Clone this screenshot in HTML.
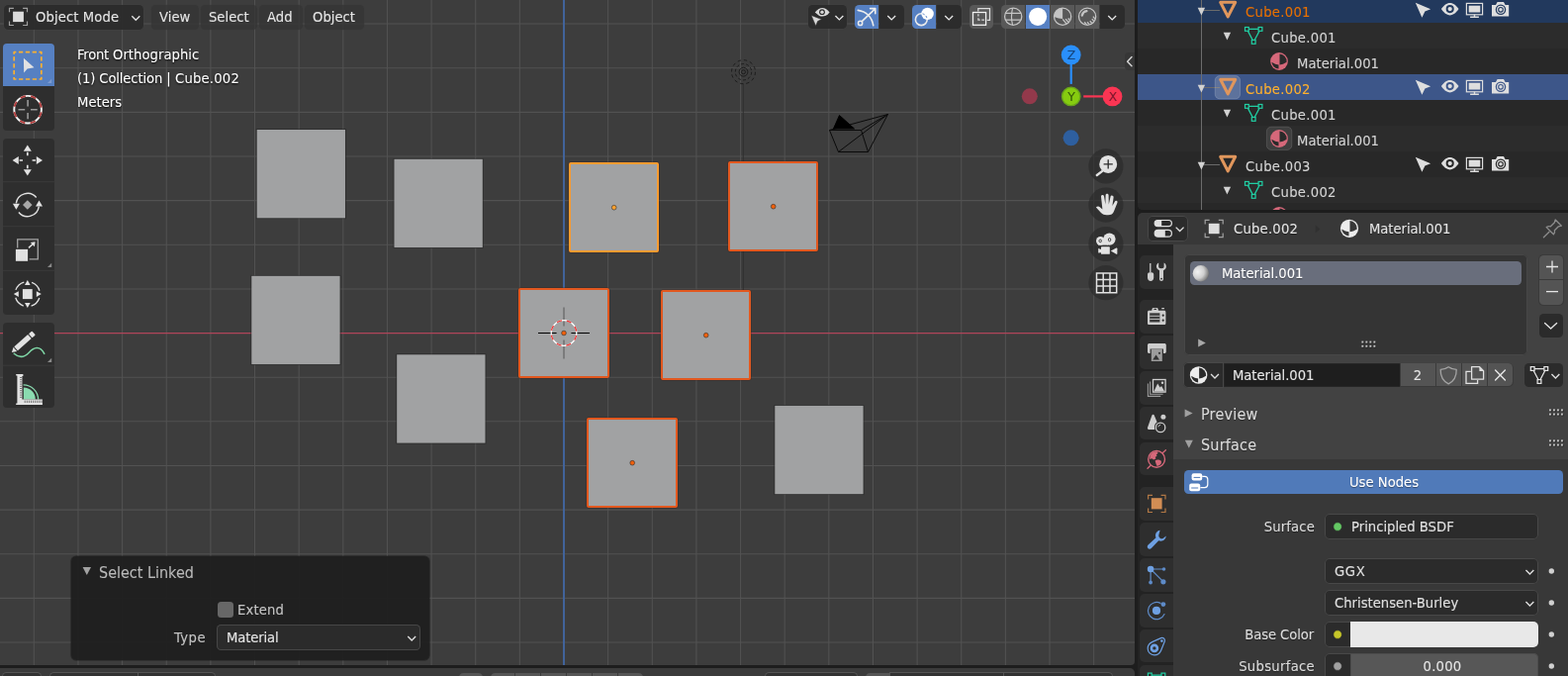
<!DOCTYPE html>
<html lang="en">
<head>
<meta charset="utf-8">
<title>Blender</title>
<style>
*{box-sizing:border-box;margin:0;padding:0}
html,body{width:1585px;height:683px;overflow:hidden;background:#1d1d1d}
body{font-family:"DejaVu Sans","Liberation Sans",sans-serif;font-size:13.2px;color:#e6e6e6;line-height:1}
#app{position:relative;-webkit-font-smoothing:antialiased;width:1585px;height:683px;overflow:hidden;background:#1d1d1d}
.abs{position:absolute}
.t{position:absolute;white-space:pre;line-height:16px;height:16px}
svg{position:absolute;overflow:visible}
#vp{position:absolute;left:0;top:0;width:1147px;height:672px;background:#3d3d3d;overflow:hidden;border-radius:0 0 4px 0}
.cube{position:absolute;background:#a1a2a3;box-shadow:0 0 0 0.6px rgba(40,40,40,.55)}
.cube.sel{border:2px solid #e2581f;border-radius:2px;box-shadow:0 0 0 0.5px rgba(60,30,20,.5)}
.cube.act{border-color:#fd9c30}
.dot{position:absolute;width:5px;height:5px;border-radius:50%;background:#f0600c;box-shadow:0 0 0 0.8px rgba(30,30,30,.9)}
.dot.act{background:#ffa12e}
.hb{position:absolute;top:5px;height:24px;border-radius:4px;background:rgba(40,40,40,.9)}
.ovt{color:#fff;text-shadow:0 1px 2px rgba(0,0,0,.9),0 0 1px rgba(0,0,0,.8)}
.t{will-change:transform}
.t{-webkit-text-stroke:0.1px currentColor}
.sh{text-shadow:0 1px 1px rgba(0,0,0,.45)}
.ttl{transform:scaleY(1.045);transform-origin:0 14px}
.t{transform:scaleY(1.04);transform-origin:0 12px}
.ttl{transform:scaleY(1.05);transform-origin:0 14px}

</style>
</head>
<body>
<div id="app">
<div id="vp">
<svg id="grid" width="1147" height="672" viewBox="0 0 1147 672" style="left:0;top:0">
<path d="M34.32 0V672M78.96 0V672M123.60 0V672M168.24 0V672M212.88 0V672M257.52 0V672M302.16 0V672M346.80 0V672M391.44 0V672M436.08 0V672M480.72 0V672M525.36 0V672M614.64 0V672M659.28 0V672M703.92 0V672M748.56 0V672M793.20 0V672M837.84 0V672M882.48 0V672M927.12 0V672M971.76 0V672M1016.40 0V672M1061.04 0V672M1105.68 0V672M0 24.07H1147M0 68.71H1147M0 113.35H1147M0 157.99H1147M0 202.63H1147M0 247.27H1147M0 291.91H1147M0 381.19H1147M0 425.83H1147M0 470.47H1147M0 515.11H1147M0 559.75H1147M0 604.39H1147M0 649.03H1147" stroke="#525252" stroke-width="1.05" fill="none"/>
<path d="M0 336.55H1147" stroke="#b0455a" stroke-width="1.25" fill="none"/>
<path d="M570.0 0V672" stroke="#41639a" stroke-width="2" fill="none"/>
</svg>
<svg width="40" height="280" viewBox="-20.5 -20.7 40 280" style="left:731px;top:52px">
<path d="M-0.2 12V264" stroke="#303030" stroke-width="1" fill="none"/>
<g fill="none" stroke="#161616" stroke-width="0.85">
<circle r="12" stroke-dasharray="3.4 2.88"/>
<circle r="8.2" stroke-dasharray="3.0 2.15"/>
<circle r="4.4"/>
<circle r="2"/>
</g>
</svg>
<svg width="1147" height="672" viewBox="0 0 1147 672" style="left:0;top:0"><rect x="259.25" y="130.55" width="90.18" height="90.18" fill="none" stroke="#2a2a2a" stroke-opacity=".75" stroke-width="0.9"/><rect x="259.70" y="131.00" width="89.28" height="89.28" fill="#a1a2a3"/><rect x="398.05" y="160.35" width="90.18" height="90.18" fill="none" stroke="#2a2a2a" stroke-opacity=".75" stroke-width="0.9"/><rect x="398.50" y="160.80" width="89.28" height="89.28" fill="#a1a2a3"/><rect x="253.85" y="278.35" width="90.18" height="90.18" fill="none" stroke="#2a2a2a" stroke-opacity=".75" stroke-width="0.9"/><rect x="254.30" y="278.80" width="89.28" height="89.28" fill="#a1a2a3"/><rect x="400.75" y="357.85" width="90.18" height="90.18" fill="none" stroke="#2a2a2a" stroke-opacity=".75" stroke-width="0.9"/><rect x="401.20" y="358.30" width="89.28" height="89.28" fill="#a1a2a3"/><rect x="782.85" y="409.45" width="90.18" height="90.18" fill="none" stroke="#2a2a2a" stroke-opacity=".75" stroke-width="0.9"/><rect x="783.30" y="409.90" width="89.28" height="89.28" fill="#a1a2a3"/></svg>
<div class="cube sel act" style="left:575.0px;top:164.0px;width:91.0px;height:91.0px"></div>
<div class="cube sel" style="left:736.0px;top:163.0px;width:91.0px;height:91.0px"></div>
<div class="cube sel" style="left:524.0px;top:291.0px;width:92.0px;height:91.0px"></div>
<div class="cube sel" style="left:668.0px;top:293.0px;width:91.0px;height:91.0px"></div>
<div class="cube sel" style="left:593.0px;top:422.0px;width:92.0px;height:91.0px"></div>
<svg width="1147" height="672" viewBox="0 0 1147 672" style="left:0;top:0"><circle cx="620.70" cy="209.70" r="2.35" fill="#ffa12e" stroke="#2c2a28" stroke-opacity=".85" stroke-width="0.7"/><circle cx="781.70" cy="208.70" r="2.35" fill="#f0600c" stroke="#2c2a28" stroke-opacity=".85" stroke-width="0.7"/><circle cx="713.70" cy="338.70" r="2.35" fill="#f0600c" stroke="#2c2a28" stroke-opacity=".85" stroke-width="0.7"/><circle cx="639.20" cy="467.70" r="2.35" fill="#f0600c" stroke="#2c2a28" stroke-opacity=".85" stroke-width="0.7"/></svg>
<svg width="60" height="60" viewBox="-30 -30.5 60 60" style="left:540px;top:306px">
<path d="M-26 0H-7.4M7.4 0H26" stroke="#000" stroke-width="1.15" fill="none"/>
<path d="M0 -26V-7M0 7V26" stroke="#686868" stroke-width="1.3" fill="none"/>
<circle r="12.8" fill="none" stroke="#fff" stroke-width="1.3"/>
<circle r="12.8" fill="none" stroke="#ee3636" stroke-width="1.3" stroke-dasharray="5.027 5.027" stroke-dashoffset="-2.51"/>
<circle r="2.35" fill="#f0600c" stroke="#2c2a28" stroke-opacity=".85" stroke-width="0.7"/>
</svg>
<svg width="80" height="60" viewBox="830 105 80 60" style="left:830px;top:105px">
<g fill="none" stroke="#0a0a0a" stroke-width="1" stroke-linejoin="round">
<path d="M838.5 131.5L870.5 131.5L877.5 153.5L847.5 153.5Z"/>
<path d="M838.5 131.5L897.5 115.5M870.5 131.5L897.5 115.5M877.5 153.5L897.5 115.5M847.5 153.5L897.5 115.5"/>
</g>
<path d="M842.5 130L848.5 116.5L863.5 130Z" fill="#000" stroke="#000" stroke-width="1" stroke-linejoin="round"/>
</svg>
<div class="abs" style="left:4.00px;top:4.50px;width:141.30px;height:25.00px;background:rgba(43,43,43,.95);border-radius:4.5px;box-shadow:0 0 0 0.6px rgba(72,72,72,.5);"></div>
<svg width="20" height="20" viewBox="-0.500 -0.900 20 20" style="left:8px;top:6px;"><g transform="translate(10 10) scale(1.0)"><rect x="-5.4" y="-5.2" width="10.8" height="10.4" fill="#dcdcdc"/>
<path d="M-9 -4.6V-8.6H-4.6M4.6 -8.6H9V-4.6M9 4.6V8.6H4.6M-4.6 8.6H-9V4.6" fill="none" stroke="#a0a0a0" stroke-width="1.2"/></g></svg>
<span class="t" style="top:10px;font-size:13.2px;line-height:16px;height:16px;color:#e4e4e4;left:36.00px;letter-spacing:0.1px;">Object Mode</span>
<svg width="16" height="16" viewBox="-0.300 -0.300 16 16" style="left:129px;top:10px;"><path d="M4.0 5.975L8 10.025L12.0 5.975" fill="none" stroke="#e0e0e0" stroke-width="1.35" stroke-linecap="butt" stroke-linejoin="miter"/></svg>
<div class="abs" style="left:153.30px;top:4.50px;width:47.70px;height:25.00px;background:rgba(52,52,52,.8);border-radius:4.5px;box-shadow:0 0 0 0.6px rgba(60,60,60,.3);"></div>
<span class="t" style="top:10px;font-size:13.2px;line-height:16px;height:16px;color:#e4e4e4;left:161.00px;">View</span>
<div class="abs" style="left:203.20px;top:4.50px;width:56.80px;height:25.00px;background:rgba(52,52,52,.8);border-radius:4.5px;box-shadow:0 0 0 0.6px rgba(60,60,60,.3);"></div>
<span class="t" style="top:10px;font-size:13.2px;line-height:16px;height:16px;color:#e4e4e4;left:211.00px;">Select</span>
<div class="abs" style="left:262.00px;top:4.50px;width:44.00px;height:25.00px;background:rgba(52,52,52,.8);border-radius:4.5px;box-shadow:0 0 0 0.6px rgba(60,60,60,.3);"></div>
<span class="t" style="top:10px;font-size:13.2px;line-height:16px;height:16px;color:#e4e4e4;left:270.00px;">Add</span>
<div class="abs" style="left:308.00px;top:4.50px;width:60.00px;height:25.00px;background:rgba(52,52,52,.8);border-radius:4.5px;box-shadow:0 0 0 0.6px rgba(60,60,60,.3);"></div>
<span class="t" style="top:10px;font-size:13.2px;line-height:16px;height:16px;color:#e4e4e4;left:316.00px;">Object</span>
<span class="t ovt" style="top:48px;font-size:13.2px;line-height:16px;height:16px;color:#fff;left:78.20px;letter-spacing:-0.3px;">Front </span>
<span class="t ovt" style="top:48px;font-size:13.2px;line-height:16px;height:16px;color:#fff;left:114.20px;letter-spacing:0.03px;">Orthographic</span>
<span class="t ovt" style="top:72px;font-size:13.2px;line-height:16px;height:16px;color:#fff;left:78.20px;letter-spacing:-0.14px;">(1) Collection | </span>
<span class="t ovt" style="top:72px;font-size:13.2px;line-height:16px;height:16px;color:#fff;left:176.60px;letter-spacing:0.2px;">Cube.002</span>
<span class="t ovt" style="top:96px;font-size:13.2px;line-height:16px;height:16px;color:#fff;left:78.20px;">Meters</span>
<div class="abs" style="left:3.00px;top:44.00px;width:52.20px;height:43.00px;background:#5680c2;border-radius:4px 4px 0 0;"></div>
<div class="abs" style="left:3.00px;top:87.00px;width:52.20px;height:45.00px;background:#2e2e2e;border-radius:0 0 4px 4px;"></div>
<div class="abs" style="left:3.00px;top:139.60px;width:52.20px;height:178.40px;background:#2e2e2e;border-radius:4px;"></div>
<div class="abs" style="left:3.00px;top:325.60px;width:52.20px;height:86.40px;background:#2e2e2e;border-radius:4px;"></div>
<svg width="60" height="380" viewBox="0.000 40.000 60 380" style="left:0px;top:40px;"><path d="M3 183.7H55.2" stroke="#3a3a3a" stroke-width="1"/><path d="M3 228.7H55.2" stroke="#3a3a3a" stroke-width="1"/><path d="M3 273.3H55.2" stroke="#3a3a3a" stroke-width="1"/><path d="M3 369.2H55.2" stroke="#3a3a3a" stroke-width="1"/><path d="M14.2 52.6H41.8V80H14.2Z" fill="none" stroke="#fbb030" stroke-width="1.7" stroke-linejoin="round" stroke-dasharray="4.3 2.575" stroke-dashoffset="2.15"/><path d="M23.9 58.8L34.5 68.2L27.6 69.4L24.2 73.6Z" fill="#e2e2e2"/><path d="M52.2 84L52.2 79.8L48.0 84Z" fill="#7d9bcf"/><circle cx="28.1" cy="110.7" r="13.8" fill="none" stroke="#f4f4f4" stroke-width="1.9"/><circle cx="28.1" cy="110.7" r="13.8" fill="none" stroke="#b03c3c" stroke-width="1.9" stroke-dasharray="5.42 5.42" stroke-dashoffset="-2.71"/><path d="M18.5 110.7H25.200000000000003M31.0 110.7H37.7M28.1 101.10000000000001V107.5M28.1 113.9V120.3" stroke="#9a9a9a" stroke-width="1.6" fill="none"/><path d="M27.80 146.60L31.80 152.80L23.80 152.80Z" fill="#e2e2e2"/><path d="M27.80 177.40L23.80 171.20L31.80 171.20Z" fill="#e2e2e2"/><path d="M12.60 162.00L18.80 158.00L18.80 166.00Z" fill="#e2e2e2"/><path d="M43.00 162.00L36.80 166.00L36.80 158.00Z" fill="#e2e2e2"/><path d="M27.8 153.8V157.2M27.8 166.8V170.2M19.6 162H23.0M32.6 162H36.0" stroke="#e2e2e2" stroke-width="1.7" fill="none"/><rect x="27.0" y="161.2" width="1.6" height="1.6" fill="none"/><path d="M16.31 205.39A11.6 11.6 0 0 1 36.69 199.54" stroke="#e2e2e2" stroke-width="1.4" fill="none"/><path d="M39.29 208.61A11.6 11.6 0 0 1 18.91 214.46" stroke="#e2e2e2" stroke-width="1.4" fill="none"/><path d="M16.40 211.80L12.90 205.80L19.90 205.80Z" fill="#e2e2e2"/><path d="M39.50 202.40L43.00 208.40L36.00 208.40Z" fill="#e2e2e2"/><path d="M27.8 202.2L32.6 207L27.8 211.8L23.0 207Z" fill="#a8a8a8"/><path d="M17.7 250.6V241.8H38.3V261.8H29.6" fill="none" stroke="#a4a4a4" stroke-width="1.3"/><rect x="15.9" y="251.9" width="12.2" height="11.9" fill="#e2e2e2"/><path d="M29 250.4L34 245.7" stroke="#e2e2e2" stroke-width="1.5" fill="none"/><path d="M35.6 244.2L30.8 245L34.9 249.2Z" fill="#e2e2e2"/><path d="M52.2 270L52.2 265.8L48.0 270Z" fill="#8a8a8a"/><circle cx="27.8" cy="297.1" r="12.6" fill="none" stroke="#e2e2e2" stroke-width="1.3" stroke-dasharray="11.8 8" stroke-dashoffset="-4"/><rect x="22.9" y="292.1" width="9.8" height="10" fill="#e2e2e2"/><path d="M27.80 283.10L30.60 288.10L25.00 288.10Z" fill="#e2e2e2"/><path d="M27.80 311.10L25.00 306.10L30.60 306.10Z" fill="#e2e2e2"/><path d="M13.80 297.10L18.80 294.30L18.80 299.90Z" fill="#e2e2e2"/><path d="M41.80 297.10L36.80 299.90L36.80 294.30Z" fill="#e2e2e2"/><g transform="translate(11.9 355.9) rotate(-41.3)"><path d="M0 0L4.6 -2.7V2.7Z" fill="#e2e2e2"/><rect x="5.6" y="-2.7" width="18.4" height="5.4" fill="#e2e2e2"/><rect x="25.1" y="-2.7" width="4.4" height="5.4" rx="0.8" fill="#e2e2e2"/></g><path d="M14.2 357.2C19 361.5 24.5 361.2 29.3 356.2C34.2 351 40 348.6 44.8 357.4" fill="none" stroke="#7fd6a6" stroke-width="1.5" stroke-linecap="round"/><path d="M52.2 366L52.2 361.8L48.0 366Z" fill="#8a8a8a"/><path d="M23.6 388.8A15 15 0 0 1 38.6 403.6" fill="none" stroke="#8adbb0" stroke-width="1.3"/><path d="M23.8 391.6A12 12 0 0 1 35.8 403.6H23.8Z" fill="#8adbb0"/><path d="M16.2 377.9H23.4V380H22.4V403.6H42.9V408.9H16.2V407.6H17.4V379.6H16.2Z" fill="#e2e2e2"/><path d="M25.2 404.6V407M27.3 404.6V407M29.4 404.6V407M31.5 404.6V407M33.6 404.6V407M35.7 404.6V407M37.8 404.6V407M39.9 404.6V407M42.0 404.6V407M20 381.5H22M20 383.7H22M20 385.9H22M20 388.1H22M20 390.3H22M20 392.5H22M20 394.7H22M20 396.9H22M20 399.1H22M20 401.3H22" stroke="#555" stroke-width="0.8" fill="none"/></svg>
<div class="abs" style="left:817.00px;top:4.70px;width:39.20px;height:24.50px;background:rgba(43,43,43,.95);border-radius:4.5px;box-shadow:0 0 0 0.6px rgba(72,72,72,.5);"></div>
<div class="abs" style="left:864.20px;top:4.70px;width:24.10px;height:24.50px;background:#5680c2;border-radius:4.5px 0 0 4.5px;"></div>
<div class="abs" style="left:888.80px;top:4.70px;width:25.10px;height:24.50px;background:rgba(43,43,43,.95);border-radius:0 4.5px 4.5px 0;"></div>
<div class="abs" style="left:922.10px;top:4.70px;width:24.20px;height:24.50px;background:#5680c2;border-radius:4.5px 0 0 4.5px;"></div>
<div class="abs" style="left:946.80px;top:4.70px;width:25.00px;height:24.50px;background:rgba(43,43,43,.95);border-radius:0 4.5px 4.5px 0;"></div>
<div class="abs" style="left:980.00px;top:4.70px;width:23.90px;height:24.50px;background:#585858;border-radius:4.5px;"></div>
<div class="abs" style="left:1012.00px;top:4.70px;width:24.40px;height:24.50px;background:#585858;border-radius:4.5px 0 0 4.5px;"></div>
<div class="abs" style="left:1037.00px;top:4.70px;width:24.10px;height:24.50px;background:#5680c2;border-radius:0;"></div>
<div class="abs" style="left:1061.70px;top:4.70px;width:24.30px;height:24.50px;background:#585858;border-radius:0;"></div>
<div class="abs" style="left:1086.60px;top:4.70px;width:24.60px;height:24.50px;background:#585858;border-radius:0;"></div>
<div class="abs" style="left:1111.80px;top:4.70px;width:25.20px;height:24.50px;background:rgba(43,43,43,.95);border-radius:0 4.5px 4.5px 0;"></div>
<svg width="16" height="16" viewBox="-0.400 -0.900 16 16" style="left:840px;top:9px;"><path d="M4.05 6.025L8 9.975L11.95 6.025" fill="none" stroke="#e8e8e8" stroke-width="1.35" stroke-linecap="butt" stroke-linejoin="miter"/></svg>
<svg width="16" height="16" viewBox="-0.200 -0.900 16 16" style="left:893px;top:9px;"><path d="M4.05 6.025L8 9.975L11.95 6.025" fill="none" stroke="#e8e8e8" stroke-width="1.35" stroke-linecap="butt" stroke-linejoin="miter"/></svg>
<svg width="16" height="16" viewBox="-0.200 -0.900 16 16" style="left:951px;top:9px;"><path d="M4.05 6.025L8 9.975L11.95 6.025" fill="none" stroke="#e8e8e8" stroke-width="1.35" stroke-linecap="butt" stroke-linejoin="miter"/></svg>
<svg width="16" height="16" viewBox="-0.200 -0.900 16 16" style="left:1116px;top:9px;"><path d="M4.05 6.025L8 9.975L11.95 6.025" fill="none" stroke="#e8e8e8" stroke-width="1.35" stroke-linecap="butt" stroke-linejoin="miter"/></svg>
<svg width="340" height="34" viewBox="810.000 0.000 340 34" style="left:810px;top:0px;"><path d="M823.8 12.6C826.4 9.2 829 8 831.2 8C833.6 8 836.2 9.2 838.6 12.6C836.2 15.6 833.6 16.6 831.2 16.6C830.2 16.6 829.2 16.4 828.2 16Z" fill="#d8d8d8"/><circle cx="831" cy="12.2" r="2.9" fill="#2b2b2b"/><circle cx="831" cy="12.2" r="1.7" fill="#d8d8d8"/><path d="M820 15.4L830.6 19.6L826.6 21.4L824.6 26.2Z" fill="#d8d8d8" stroke="#2b2b2b" stroke-width="0.6"/><path d="M867.2 10.4C875.6 11.6 881.4 17.4 882.8 25.8" fill="none" stroke="#ececec" stroke-width="1.6" stroke-linecap="round"/><path d="M871.2 21.6L884.6 8.8M879.6 8.6H884.8V13.8" fill="none" stroke="#ececec" stroke-width="1.6" stroke-linecap="round" stroke-linejoin="round"/><circle cx="869.6" cy="23.4" r="2.1" fill="#5680c2" stroke="#ececec" stroke-width="1.5"/><circle cx="931.3" cy="19.7" r="5.9" fill="none" stroke="#ececec" stroke-width="1.6"/><circle cx="937.6" cy="13.9" r="6.2" fill="#fff"/><path d="M932.6 13.9A6 6 0 0 1 937 18.4" fill="none" stroke="#5680c2" stroke-width="1" stroke-dasharray="2.2 1.6"/><path d="M988.8 11.6V8.5H1000.5V20.3H997.8" fill="none" stroke="#dcdcdc" stroke-width="1.25"/><rect x="983.5" y="12.5" width="13.1" height="12.8" fill="none" stroke="#f2f2f2" stroke-width="1.3"/><path d="M988.9 14.3V16.6M988.9 18.3V20.2H990.8M992.2 20.2H995" fill="none" stroke="#d4d4d4" stroke-width="1.3"/><circle cx="1024.2" cy="16.7" r="8.6" fill="none" stroke="#c4c4c4" stroke-width="1.3"/><path d="M1023.6 8.1Q1021.4000000000001 16.7 1023.6 25.299999999999997M1016.3000000000001 13.299999999999999H1032.1000000000001M1016.3000000000001 20.099999999999998H1032.1000000000001" fill="none" stroke="#c4c4c4" stroke-width="1.2"/><circle cx="1049.1" cy="16.8" r="9.1" fill="#fff"/><circle cx="1074.1" cy="16.7" r="8.6" fill="none" stroke="#c4c4c4" stroke-width="1.3"/><path d="M1074.1 8.1A8.6 8.6 0 0 0 1065.51 17.0Q1070.23 18.8 1074.1 19.0Z" fill="#c4c4c4"/><clipPath id="cpm"><circle cx="1074.1" cy="16.7" r="8.2"/></clipPath><g clip-path="url(#cpm)"><path d="M1074.3 19.3L1078.1 24.1M1077.1 19.099999999999998L1081.1 23.7M1079.6999999999998 18.5L1083.1 22.299999999999997" fill="none" stroke="#c4c4c4" stroke-width="1.35"/></g><circle cx="1099.1" cy="16.7" r="8.6" fill="none" stroke="#c4c4c4" stroke-width="1.3"/><path d="M1093.8 15.6A5.6 5.6 0 0 1 1098.3999999999999 11.2" fill="none" stroke="#c4c4c4" stroke-width="2.3" stroke-linecap="round"/><clipPath id="cpr"><circle cx="1099.1" cy="16.7" r="8.2"/></clipPath><g clip-path="url(#cpr)"><path d="M1096.18 22.28L1098.98 25.68M1099.08 22.23L1101.88 25.63M1101.75 21.10L1104.55 24.50M1103.80 19.05L1106.60 22.45M1104.87 16.64L1107.67 20.04" fill="none" stroke="#c4c4c4" stroke-width="1.3"/></g></svg>
<svg width="130" height="120" viewBox="1020.000 36.000 130 120" style="left:1020px;top:36px;"><circle cx="1040.8" cy="97.3" r="8" fill="#93394b"/><circle cx="1082.6" cy="139.3" r="8" fill="#2e5f9f"/><path d="M1082.7 64V84.9" stroke="#2a8ffb" stroke-width="2.2"/><path d="M1095.2 97.4H1116" stroke="#fb3553" stroke-width="2.2"/><circle cx="1082.7" cy="55.4" r="9.9" fill="#2a8ffb"/><circle cx="1124.5" cy="97.4" r="9.9" fill="#fb3553"/><circle cx="1082.7" cy="97.4" r="9.2" fill="#86cc10" stroke="#69a51c" stroke-width="1.4"/></svg>
<span class="t" style="top:48px;font-size:12.4px;line-height:16px;height:16px;color:#16457c;left:882.80px;width:400px;text-align:center;">Z</span>
<span class="t" style="top:90px;font-size:12.4px;line-height:16px;height:16px;color:#35590a;left:882.80px;width:400px;text-align:center;">Y</span>
<span class="t" style="top:90px;font-size:12.4px;line-height:16px;height:16px;color:#80182e;left:924.60px;width:400px;text-align:center;">X</span>
<div class="abs" style="left:1136.60px;top:53.00px;width:11.40px;height:18.40px;background:rgba(52,52,52,.8);border-radius:4px 0 0 4px;"></div>
<svg width="12" height="20" viewBox="0.000 0.000 12 20" style="left:1136px;top:53px;"><path d="M8 4.6L3.6 9.2L8 13.8" fill="none" stroke="#d6d6d6" stroke-width="1.4" stroke-linecap="round" stroke-linejoin="round"/></svg>
<svg width="60" height="165" viewBox="1090.000 145.000 60 165" style="left:1090px;top:145px;"><circle cx="1117.9" cy="167.9" r="17.6" fill="rgba(40,40,40,.62)"/><circle cx="1117.9" cy="207.1" r="17.6" fill="rgba(40,40,40,.62)"/><circle cx="1117.9" cy="246.5" r="17.6" fill="rgba(40,40,40,.62)"/><circle cx="1117.9" cy="285.7" r="17.6" fill="rgba(40,40,40,.62)"/><path d="M1114.6 172.6L1108.8 177" stroke="#e2e2e2" stroke-width="2.4" stroke-linecap="round"/><circle cx="1120.2" cy="165.9" r="9" fill="#e2e2e2"/><path d="M1115.6 165.9H1124.8M1120.2 161.3V170.5" stroke="#2c2c2c" stroke-width="1.3"/><path d="M1107.9 209.6C1108.8 208.4 1110.6 208.2 1111.8 209.2L1114.4 211.6L1113 198.6C1112.8 196.6 1115.6 196.2 1116 198.2L1117.4 206.4L1117.6 197.2C1117.6 195.2 1120.6 195.2 1120.6 197.2L1120.8 206.4L1122.6 198.6C1123 196.8 1125.8 197.4 1125.6 199.4L1124.4 208L1127 203.6C1128 202 1130.2 203.2 1129.4 205L1126 213.4C1125 216 1123 217.2 1120.2 217.2H1118.6C1116.2 217.2 1114.6 216.6 1113 215Z" fill="#e2e2e2"/><circle cx="1112.4" cy="243.3" r="4.4" fill="#e2e2e2"/><circle cx="1121.4" cy="241.6" r="6.2" fill="#e2e2e2"/><rect x="1110" y="242" width="10" height="5.6" fill="#e2e2e2"/><circle cx="1112.2" cy="243.4" r="1.3" fill="none" stroke="#333" stroke-width="0.9"/><ellipse cx="1121.6" cy="242.2" rx="1.2" ry="1.6" fill="none" stroke="#333" stroke-width="0.9"/><rect x="1113" y="249.2" width="8.8" height="7.6" rx="0.6" fill="#e2e2e2"/><path d="M1122.8 253.6L1128.4 250.6C1129 250.4 1129.4 250.6 1129.4 251.2V256.2C1129.4 256.8 1129 257 1128.4 256.8Z" fill="#e2e2e2"/><path d="M1110.2 251L1113 252V255.2L1110.2 255.6Z" fill="#e2e2e2"/><path d="M1108.5 275.9H1128.7V295.7H1108.5ZM1115.2 275.9V295.7M1122 275.9V295.7M1108.5 282.5H1128.7M1108.5 289.1H1128.7" fill="none" stroke="#e2e2e2" stroke-width="1.5"/></svg>
<div class="abs" style="left:72.30px;top:562.20px;width:361.90px;height:104.40px;background:rgba(31,31,31,.96);border-radius:5px;box-shadow:0 0 0 0.6px rgba(20,20,20,.6);"></div>
<svg width="16" height="14" viewBox="0.000 0.000 16 14" style="left:80px;top:570px;"><path d="M3.6 3L12 3L7.8 11Z" fill="#a2a2a2"/></svg>
<span class="t ttl" style="top:570px;font-size:14.4px;line-height:18px;height:18px;color:#b9b9b9;left:100.20px;">Select Linked</span>
<div class="abs" style="left:219.80px;top:608.00px;width:16.40px;height:16.40px;background:#676767;border-radius:3.5px;"></div>
<span class="t" style="top:609px;font-size:13.2px;line-height:16px;height:16px;color:#c4c4c4;left:240.30px;letter-spacing:0.15px;">Extend</span>
<span class="t" style="top:637px;font-size:13.2px;line-height:16px;height:16px;color:#c4c4c4;left:-191.60px;width:400px;text-align:right;letter-spacing:0.45px;">Type</span>
<div class="abs" style="left:219.40px;top:631.20px;width:205.20px;height:25.60px;background:#2b2b2b;border-radius:4.5px;box-shadow:inset 0 0 0 1px #474747;"></div>
<span class="t" style="top:637px;font-size:13.2px;line-height:16px;height:16px;color:#e6e6e6;left:229.40px;letter-spacing:-0.12px;">Material</span>
<svg width="16" height="16" viewBox="-0.200 0.000 16 16" style="left:408px;top:637px;"><path d="M4.05 6.025L8 9.975L11.95 6.025" fill="none" stroke="#e0e0e0" stroke-width="1.35" stroke-linecap="butt" stroke-linejoin="miter"/></svg>
</div>
<div class="abs" style="left:0.00px;top:675.00px;width:1147.00px;height:15.00px;background:#3b3b3b;border-radius:0 5px 0 0;"></div>
<div class="abs" style="left:2.00px;top:679.00px;width:40.00px;height:11.00px;background:#323232;border-radius:4.5px 4.5px 0 0;box-shadow:inset 0 0 0 1px #545454;"></div>
<div class="abs" style="left:50.00px;top:679.00px;width:90.00px;height:11.00px;background:#323232;border-radius:4.5px 0 0 0;box-shadow:inset 0 0 0 1px #545454;"></div>
<div class="abs" style="left:139.00px;top:679.00px;width:79.00px;height:11.00px;background:#323232;border-radius:0 4.5px 0 0;box-shadow:inset 0 0 0 1px #545454;"></div>
<div class="abs" style="left:464.00px;top:680.00px;width:24.00px;height:10.00px;background:#565656;border-radius:4.5px 4.5px 0 0;"></div>
<div class="abs" style="left:496.00px;top:680.00px;width:24.00px;height:10.00px;background:#565656;border-radius:4.5px 0 0 0;"></div>
<div class="abs" style="left:521.00px;top:680.00px;width:25.00px;height:10.00px;background:#565656;border-radius:0;"></div>
<div class="abs" style="left:547.00px;top:680.00px;width:25.00px;height:10.00px;background:#565656;border-radius:0;"></div>
<div class="abs" style="left:573.00px;top:680.00px;width:25.00px;height:10.00px;background:#565656;border-radius:0;"></div>
<div class="abs" style="left:599.00px;top:680.00px;width:25.00px;height:10.00px;background:#565656;border-radius:0;"></div>
<div class="abs" style="left:625.00px;top:680.00px;width:25.00px;height:10.00px;background:#565656;border-radius:0 4.5px 0 0;"></div>
<div class="abs" style="left:773.00px;top:679.00px;width:94.00px;height:11.00px;background:#323232;border-radius:4.5px 4.5px 0 0;box-shadow:inset 0 0 0 1px #545454;"></div>
<div class="abs" style="left:875.00px;top:680.00px;width:24.00px;height:10.00px;background:#565656;border-radius:4.5px 0 0 0;"></div>
<div class="abs" style="left:899.00px;top:679.00px;width:116.00px;height:11.00px;background:#323232;border-radius:0;box-shadow:inset 0 0 0 1px #545454;"></div>
<div class="abs" style="left:1014.00px;top:679.00px;width:111.00px;height:11.00px;background:#323232;border-radius:0 4.5px 0 0;box-shadow:inset 0 0 0 1px #545454;"></div>
<div id="outl" class="abs" style="left:1149.8px;top:0;width:436px;height:212.2px;background:#2a2a2a;border-radius:0 0 0 5px;overflow:hidden"><div class="abs" style="left:0;top:-3.00px;width:436px;height:26.00px;background:#22395d"></div><div class="abs" style="left:0;top:22.95px;width:436px;height:26.00px;background:#2c2c2c"></div><div class="abs" style="left:0;top:48.90px;width:436px;height:26.00px;background:#282828"></div><div class="abs" style="left:0;top:74.85px;width:436px;height:26.00px;background:#3d5689"></div><div class="abs" style="left:0;top:100.80px;width:436px;height:26.00px;background:#282828"></div><div class="abs" style="left:0;top:126.75px;width:436px;height:26.00px;background:#2c2c2c"></div><div class="abs" style="left:0;top:152.70px;width:436px;height:26.00px;background:#282828"></div><div class="abs" style="left:0;top:178.65px;width:436px;height:26.00px;background:#2c2c2c"></div><div class="abs" style="left:0;top:204.60px;width:436px;height:26.00px;background:#282828"></div>
</div>
<svg width="436" height="212.2" viewBox="1149.000 0.000 436 212.2" style="left:1149px;top:0px;overflow:hidden"><path d="M1214.5 0V212" stroke="#6c6c6c" stroke-width="1"/><path d="M1214.4 10.5H1233" stroke="#6c6c6c" stroke-width="1"/><path d="M1214.4 88.5H1233" stroke="#6c6c6c" stroke-width="1"/><path d="M1214.4 166.5H1233" stroke="#6c6c6c" stroke-width="1"/><rect x="1228.2" y="76.6" width="25.4" height="23.2" rx="4.5" fill="rgba(255,255,255,.17)" stroke="rgba(255,255,255,.22)" stroke-width="0.8"/><rect x="1280.4" y="128.2" width="25.4" height="23.2" rx="4.5" fill="rgba(255,255,255,.09)" stroke="rgba(255,255,255,.17)" stroke-width="0.8"/><path d="M1210.7 7.800000000000001H1218.1000000000001L1214.4 15.4Z" fill="#d2d2d2"/><path d="M1233.7 2.3000000000000007H1248.7L1241.2 16.9Z" fill="none" stroke="#e0965c" stroke-width="3.1" stroke-linejoin="round"/><path d="M1430.8 2.7L1446.2 9.200000000000001L1440.4 11.600000000000001L1437.4 17.8Z" fill="#dedede"/><path d="M1456.9 9.1C1460.1000000000001 4.4 1463.3 3.0 1465.7 3.0C1468.1000000000001 3.0 1471.3 4.4 1474.5 9.1C1471.3 14.0 1468.1000000000001 15.4 1465.7 15.4C1463.3 15.4 1460.1000000000001 14.0 1456.9 9.1Z" fill="#dedede"/><circle cx="1465.7" cy="9.1" r="3.1" fill="none" stroke="#22395d" stroke-width="1.9"/><rect x="1482.4" y="3.4000000000000004" width="16.2" height="11.4" fill="none" stroke="#dedede" stroke-width="1.2"/><rect x="1484.7" y="5.7" width="11.6" height="6.8" fill="#dedede"/><path d="M1490.5 14.8V17.0M1486.1 17.2H1494.9" stroke="#dedede" stroke-width="1.4" fill="none"/><path d="M1508.0 5.0H1512.0L1513.6 2.0H1520.0L1521.6 5.0H1525.1999999999998V16.4H1508.0Z" fill="#dedede"/><circle cx="1517.0" cy="9.8" r="4.6" fill="none" stroke="#22395d" stroke-width="1.3"/><circle cx="1517.0" cy="9.8" r="2.3" fill="none" stroke="#22395d" stroke-width="1.1"/><path d="M1210.7 85.80000000000001H1218.1000000000001L1214.4 93.4Z" fill="#d2d2d2"/><path d="M1233.7 80.30000000000001H1248.7L1241.2 94.9Z" fill="none" stroke="#e0965c" stroke-width="3.1" stroke-linejoin="round"/><path d="M1430.8 80.7L1446.2 87.2L1440.4 89.60000000000001L1437.4 95.80000000000001Z" fill="#dedede"/><path d="M1456.9 87.10000000000001C1460.1000000000001 82.4 1463.3 81.0 1465.7 81.0C1468.1000000000001 81.0 1471.3 82.4 1474.5 87.10000000000001C1471.3 92.0 1468.1000000000001 93.4 1465.7 93.4C1463.3 93.4 1460.1000000000001 92.0 1456.9 87.10000000000001Z" fill="#dedede"/><circle cx="1465.7" cy="87.10000000000001" r="3.1" fill="none" stroke="#3d5689" stroke-width="1.9"/><rect x="1482.4" y="81.4" width="16.2" height="11.4" fill="none" stroke="#dedede" stroke-width="1.2"/><rect x="1484.7" y="83.7" width="11.6" height="6.8" fill="#dedede"/><path d="M1490.5 92.80000000000001V95.0M1486.1 95.2H1494.9" stroke="#dedede" stroke-width="1.4" fill="none"/><path d="M1508.0 83.0H1512.0L1513.6 80.0H1520.0L1521.6 83.0H1525.1999999999998V94.4H1508.0Z" fill="#dedede"/><circle cx="1517.0" cy="87.80000000000001" r="4.6" fill="none" stroke="#3d5689" stroke-width="1.3"/><circle cx="1517.0" cy="87.80000000000001" r="2.3" fill="none" stroke="#3d5689" stroke-width="1.1"/><path d="M1210.7 163.8H1218.1000000000001L1214.4 171.4Z" fill="#d2d2d2"/><path d="M1233.7 158.3H1248.7L1241.2 172.9Z" fill="none" stroke="#e0965c" stroke-width="3.1" stroke-linejoin="round"/><path d="M1430.8 158.70000000000002L1446.2 165.20000000000002L1440.4 167.6L1437.4 173.8Z" fill="#dedede"/><path d="M1456.9 165.1C1460.1000000000001 160.4 1463.3 159.0 1465.7 159.0C1468.1000000000001 159.0 1471.3 160.4 1474.5 165.1C1471.3 170.0 1468.1000000000001 171.4 1465.7 171.4C1463.3 171.4 1460.1000000000001 170.0 1456.9 165.1Z" fill="#dedede"/><circle cx="1465.7" cy="165.1" r="3.1" fill="none" stroke="#282828" stroke-width="1.9"/><rect x="1482.4" y="159.4" width="16.2" height="11.4" fill="none" stroke="#dedede" stroke-width="1.2"/><rect x="1484.7" y="161.70000000000002" width="11.6" height="6.8" fill="#dedede"/><path d="M1490.5 170.8V173.0M1486.1 173.20000000000002H1494.9" stroke="#dedede" stroke-width="1.4" fill="none"/><path d="M1508.0 161.0H1512.0L1513.6 158.0H1520.0L1521.6 161.0H1525.1999999999998V172.4H1508.0Z" fill="#dedede"/><circle cx="1517.0" cy="165.8" r="4.6" fill="none" stroke="#282828" stroke-width="1.3"/><circle cx="1517.0" cy="165.8" r="2.3" fill="none" stroke="#282828" stroke-width="1.1"/><path d="M1236.7 32.8H1244.1000000000001L1240.4 40.4Z" fill="#d2d2d2"/><path d="M1260.4 29.400000000000002H1274.0L1267.2 42.4Z" fill="none" stroke="#21cfa4" stroke-width="1.25" stroke-linejoin="round"/><rect x="1258.5" y="27.500000000000004" width="3.8" height="3.8" fill="#2a2a2a" stroke="#21cfa4" stroke-width="1.2"/><rect x="1272.1" y="27.500000000000004" width="3.8" height="3.8" fill="#2a2a2a" stroke="#21cfa4" stroke-width="1.2"/><rect x="1265.3" y="40.5" width="3.8" height="3.8" fill="#2a2a2a" stroke="#21cfa4" stroke-width="1.2"/><path d="M1236.7 110.80000000000001H1244.1000000000001L1240.4 118.4Z" fill="#d2d2d2"/><path d="M1260.4 107.4H1274.0L1267.2 120.4Z" fill="none" stroke="#21cfa4" stroke-width="1.25" stroke-linejoin="round"/><rect x="1258.5" y="105.5" width="3.8" height="3.8" fill="#2a2a2a" stroke="#21cfa4" stroke-width="1.2"/><rect x="1272.1" y="105.5" width="3.8" height="3.8" fill="#2a2a2a" stroke="#21cfa4" stroke-width="1.2"/><rect x="1265.3" y="118.5" width="3.8" height="3.8" fill="#2a2a2a" stroke="#21cfa4" stroke-width="1.2"/><path d="M1236.7 188.8H1244.1000000000001L1240.4 196.4Z" fill="#d2d2d2"/><path d="M1260.4 185.4H1274.0L1267.2 198.4Z" fill="none" stroke="#21cfa4" stroke-width="1.25" stroke-linejoin="round"/><rect x="1258.5" y="183.5" width="3.8" height="3.8" fill="#2a2a2a" stroke="#21cfa4" stroke-width="1.2"/><rect x="1272.1" y="183.5" width="3.8" height="3.8" fill="#2a2a2a" stroke="#21cfa4" stroke-width="1.2"/><rect x="1265.3" y="196.5" width="3.8" height="3.8" fill="#2a2a2a" stroke="#21cfa4" stroke-width="1.2"/><circle cx="1293" cy="62.0" r="8.9" fill="#d6687a"/><path d="M1293.50 54.45A7.6000000000000005 7.6000000000000005 0 0 1 1300.57 62.70Q1296.80 65.20 1293.50 65.50Z" fill="#2a2a2a"/><path d="M1292.50 65.50Q1289.20 65.20 1285.43 62.70A7.6000000000000005 7.6000000000000005 0 0 0 1292.50 69.55Z" fill="#2a2a2a"/><circle cx="1293" cy="140.0" r="8.9" fill="#d6687a"/><path d="M1293.50 132.45A7.6000000000000005 7.6000000000000005 0 0 1 1300.57 140.70Q1296.80 143.20 1293.50 143.50Z" fill="#2a2a2a"/><path d="M1292.50 143.50Q1289.20 143.20 1285.43 140.70A7.6000000000000005 7.6000000000000005 0 0 0 1292.50 147.55Z" fill="#2a2a2a"/><circle cx="1293" cy="218.0" r="8.9" fill="#d6687a"/><path d="M1293.50 210.45A7.6000000000000005 7.6000000000000005 0 0 1 1300.57 218.70Q1296.80 221.20 1293.50 221.50Z" fill="#2a2a2a"/><path d="M1292.50 221.50Q1289.20 221.20 1285.43 218.70A7.6000000000000005 7.6000000000000005 0 0 0 1292.50 225.55Z" fill="#2a2a2a"/></svg>
<span class="t" style="top:5px;font-size:13.2px;line-height:16px;height:16px;color:#e87000;left:1258.70px;letter-spacing:0.3px;">Cube.001</span>
<span class="t" style="top:31px;font-size:13.2px;line-height:16px;height:16px;color:#d4d4d4;left:1284.80px;letter-spacing:0.3px;">Cube.001</span>
<span class="t" style="top:57px;font-size:13.2px;line-height:16px;height:16px;color:#d4d4d4;left:1310.80px;">Material.001</span>
<span class="t" style="top:83px;font-size:13.2px;line-height:16px;height:16px;color:#ffb02e;left:1258.70px;letter-spacing:0.3px;">Cube.002</span>
<span class="t" style="top:109px;font-size:13.2px;line-height:16px;height:16px;color:#d4d4d4;left:1284.80px;letter-spacing:0.3px;">Cube.001</span>
<span class="t" style="top:135px;font-size:13.2px;line-height:16px;height:16px;color:#d4d4d4;left:1310.80px;">Material.001</span>
<span class="t" style="top:161px;font-size:13.2px;line-height:16px;height:16px;color:#d4d4d4;left:1258.70px;letter-spacing:0.3px;">Cube.003</span>
<span class="t" style="top:187px;font-size:13.2px;line-height:16px;height:16px;color:#d4d4d4;left:1284.80px;letter-spacing:0.3px;">Cube.002</span>
<div id="props" class="abs" style="left:1149.8px;top:214.8px;width:436px;height:470px;background:#232323;border-radius:5px 0 0 0;overflow:hidden">
<div class="abs" style="left:0;top:0;width:436px;height:32px;background:#383838"></div>
<div class="abs" style="left:36.3px;top:32px;width:400px;height:440px;background:#424242"></div>
<div class="abs" style="left:36.3px;top:249.2px;width:400px;height:230px;background:#383838"></div>
</div>
<div class="abs" style="left:1152.20px;top:258.30px;width:33.90px;height:33.50px;background:#2e2e2e;border-radius:5px 0 0 5px;"></div>
<div class="abs" style="left:1152.20px;top:303.20px;width:33.90px;height:33.50px;background:#2e2e2e;border-radius:5px 0 0 5px;"></div>
<div class="abs" style="left:1152.20px;top:339.10px;width:33.90px;height:33.50px;background:#2e2e2e;border-radius:5px 0 0 5px;"></div>
<div class="abs" style="left:1152.20px;top:375.00px;width:33.90px;height:33.50px;background:#2e2e2e;border-radius:5px 0 0 5px;"></div>
<div class="abs" style="left:1152.20px;top:410.90px;width:33.90px;height:33.50px;background:#2e2e2e;border-radius:5px 0 0 5px;"></div>
<div class="abs" style="left:1152.20px;top:446.80px;width:33.90px;height:33.50px;background:#2e2e2e;border-radius:5px 0 0 5px;"></div>
<div class="abs" style="left:1152.20px;top:492.30px;width:33.90px;height:33.50px;background:#2e2e2e;border-radius:5px 0 0 5px;"></div>
<div class="abs" style="left:1152.20px;top:528.20px;width:33.90px;height:33.50px;background:#2e2e2e;border-radius:5px 0 0 5px;"></div>
<div class="abs" style="left:1152.20px;top:564.10px;width:33.90px;height:33.50px;background:#2e2e2e;border-radius:5px 0 0 5px;"></div>
<div class="abs" style="left:1152.20px;top:600.00px;width:33.90px;height:33.50px;background:#2e2e2e;border-radius:5px 0 0 5px;"></div>
<div class="abs" style="left:1152.20px;top:635.90px;width:33.90px;height:33.50px;background:#2e2e2e;border-radius:5px 0 0 5px;"></div>
<div class="abs" style="left:1152.20px;top:671.80px;width:33.90px;height:33.50px;background:#2e2e2e;border-radius:5px 0 0 5px;"></div>
<svg width="40" height="440" viewBox="1149.000 250.000 40 440" style="left:1149px;top:250px;"><path d="M1162.8 266V275.6" stroke="#cdcdcd" stroke-width="1.3"/><path d="M1160 277.4C1160 276 1160.8 275.2 1162 275.2H1164.2C1165.4 275.2 1166.2 276 1166.2 277.4V280.8C1166.2 282.8 1164.8 284 1163.1 284C1161.4 284 1160 282.8 1160 280.8Z" fill="#cdcdcd"/><path d="M1171.2 265.6C1169.4 266.6 1168.8 268.2 1169 269.8C1169.2 271.4 1170.4 272.6 1172 273.2V282C1172 284.6 1176 284.6 1176 282V273.2C1177.6 272.6 1178.8 271.4 1178.8 269.8C1178.9 268.2 1178.4 266.6 1176.6 265.6V269.6C1176.6 270.6 1175.8 271.2 1174 271.2C1172.2 271.2 1171.2 270.6 1171.2 269.6Z" fill="#cdcdcd"/><circle cx="1174" cy="281.6" r="0.9" fill="#2e2e2e"/><path d="M1160 315.4C1160 314.4 1160.6 313.8 1161.6 313.8H1164.2L1164.8 311.6C1165 311.2 1165.2 311 1165.8 311H1169.4C1170 311 1170.2 311.2 1170.4 311.6L1171 313.8H1176.8C1177.8 313.8 1178.4 314.4 1178.4 315.4V326.4C1178.4 327.4 1177.8 328 1176.8 328H1161.6C1160.6 328 1160 327.4 1160 326.4Z" fill="#cdcdcd"/><rect x="1174.2" y="310.9" width="2.8" height="1.3" rx="0.5" fill="#cdcdcd"/><rect x="1162.2" y="316.3" width="10.2" height="9.2" fill="#3a3a3a"/><path d="M1162.2 319.3H1172.4M1162.2 322.4H1172.4" stroke="#cdcdcd" stroke-width="0.9"/><rect x="1166.4" y="311.8" width="2.6" height="1.2" fill="#3a3a3a"/><circle cx="1175.7" cy="318.7" r="1.1" fill="#2e2e2e"/><circle cx="1175.7" cy="323.7" r="1.1" fill="#2e2e2e"/><path d="M1160 348.6C1160 347.6 1160.8 346.9 1161.8 346.9H1177C1178 346.9 1178.8 347.6 1178.8 348.6V355.6C1178.8 356.4 1178.2 357 1177.4 357H1176V352.6H1162.6V357H1161.4C1160.6 357 1160 356.4 1160 355.6Z" fill="#cdcdcd"/><rect x="1163.8" y="352.6" width="11" height="12.4" fill="#9c9c9c"/><path d="M1165.2 363.4L1168.6 358.4L1172 363.4Z" fill="#333"/><circle cx="1172" cy="356.8" r="1.1" fill="#333"/><path d="M1160.4 387.6V400.4H1173.2M1162.6 385.6V398.2H1175.6" fill="none" stroke="#9a9a9a" stroke-width="1.1"/><rect x="1165.5" y="383.5" width="12.6" height="12.6" fill="#333" stroke="#cdcdcd" stroke-width="1.3"/><path d="M1166.4 395.4L1170.2 387.6L1172.6 391.4L1174 390L1177.2 395.4Z" fill="#cdcdcd"/><circle cx="1175" cy="386.8" r="1.2" fill="#cdcdcd"/><path d="M1165.6 418.8C1166.2 418.8 1166.6 419.2 1166.9 419.9L1169.6 426.6C1167.8 427.8 1166.8 429.8 1167 432.2C1167 432.8 1167.2 433.4 1167.4 433.9H1161.2C1160.2 433.9 1159.7 433.1 1160 432.1L1164.3 419.9C1164.6 419.2 1165 418.8 1165.6 418.8Z" fill="#cdcdcd"/><circle cx="1173.1" cy="431.9" r="4.7" fill="#2e2e2e" stroke="#cdcdcd" stroke-width="1.3"/><path d="M1170.8 431A2.6 2.6 0 0 1 1172.8 429.2" fill="none" stroke="#cdcdcd" stroke-width="0.9" stroke-linecap="round"/><circle cx="1175.9" cy="421.3" r="2.5" fill="#cdcdcd"/><circle cx="1169.1" cy="463.9" r="8.4" fill="none" stroke="#d6687a" stroke-width="1.4"/><path d="M1162.4 460.4C1163.6 457.6 1166.6 456 1169.6 456.2L1170.6 458L1168.8 459.2L1169.6 460.8L1167.8 461.8L1168.4 463.4L1166 464.6L1164.4 463.2L1162.2 464Z" fill="#d6687a"/><path d="M1167.6 465.4C1169.2 464 1172.2 464.4 1173.8 465.8C1174.4 467.4 1173.4 469.4 1171.8 470.2L1169.6 471L1168.6 468.8Z" fill="#d6687a"/><path d="M1160 473.2L1162.8 470.6M1175.4 457.4L1178.4 454.8" stroke="#d6687a" stroke-width="1.3" stroke-linecap="round"/><rect x="1163.8" y="503.2" width="10.8" height="11.2" fill="#d28d54"/><path d="M1160.6 504.4V500.3H1165M1173.6 500.3H1178V504.4M1178 513.4V517.5H1173.6M1165 517.5H1160.6V513.4" fill="none" stroke="#b27845" stroke-width="1.2"/><path d="M1172.6 535.8C1170 536.2 1168.2 538.2 1168 540.6C1167.9 541.6 1168.1 542.4 1168.5 543.2L1160.6 550.6C1159.4 551.8 1159.6 553.4 1160.6 554.2C1161.6 555 1163 554.8 1164 553.8L1171.2 546.2C1172.2 546.6 1173.2 546.8 1174.4 546.6C1176.8 546.2 1178.6 544.2 1178.8 541.6L1175.6 544C1174.6 544.6 1173.4 544.4 1172.4 543.4C1171.4 542.4 1171 541.2 1171.4 540.2Z" fill="#6ea0e2"/><path d="M1163.1 575H1176.4M1163.1 575V588.4M1163.1 575L1175.8 587.6" fill="none" stroke="#5e8bc8" stroke-width="1.2"/><circle cx="1163.1" cy="575" r="3.3" fill="#6ea0e2"/><circle cx="1176.5" cy="575" r="1.8" fill="#5e8bc8"/><circle cx="1163.1" cy="588.5" r="1.9" fill="#5e8bc8"/><circle cx="1175.9" cy="587.8" r="2.6" fill="#5e8bc8"/><circle cx="1169" cy="616.9" r="4.1" fill="#6ea0e2"/><path d="M1173 609.4A8.6 8.6 0 1 0 1177 620.6" fill="none" stroke="#5e8bc8" stroke-width="1.2" stroke-linecap="round"/><circle cx="1175.9" cy="610.6" r="2.4" fill="#5e8bc8"/><path d="M1160.2 655.2C1160.2 651.8 1162.4 649.6 1165.2 648.4L1173.6 644.6C1175.8 643.8 1177.8 645.4 1177.4 647.8L1173.6 657.2C1172.4 660 1170 661.8 1166.8 661.8C1163 661.8 1160.2 658.8 1160.2 655.2Z" fill="none" stroke="#6ea0e2" stroke-width="1.2" stroke-linejoin="round"/><circle cx="1166.9" cy="654.9" r="3" fill="none" stroke="#6ea0e2" stroke-width="2.6"/><circle cx="1174.4" cy="647.6" r="1.3" fill="#6ea0e2"/><path d="M1162.3 682.0H1175.8999999999999L1169.1 695.0Z" fill="none" stroke="#21cfa4" stroke-width="1.25" stroke-linejoin="round"/><rect x="1160.3999999999999" y="680.1" width="3.8" height="3.8" fill="#2e2e2e" stroke="#21cfa4" stroke-width="1.2"/><rect x="1173.9999999999998" y="680.1" width="3.8" height="3.8" fill="#2e2e2e" stroke="#21cfa4" stroke-width="1.2"/><rect x="1167.1999999999998" y="693.1" width="3.8" height="3.8" fill="#2e2e2e" stroke="#21cfa4" stroke-width="1.2"/></svg>
<div class="abs" style="left:1159.90px;top:217.50px;width:41.60px;height:26.80px;background:#2b2b2b;border-radius:5px;box-shadow:inset 0 0 0 1px #484848;"></div>
<svg width="16" height="16" viewBox="-0.600 -0.600 16 16" style="left:1184px;top:223px;"><path d="M4.05 6.025L8 9.975L11.95 6.025" fill="none" stroke="#e0e0e0" stroke-width="1.35" stroke-linecap="butt" stroke-linejoin="miter"/></svg>
<svg width="20" height="20" viewBox="-0.200 0.000 20 20" style="left:1217px;top:221px;"><g transform="translate(10 10) scale(1.0)"><rect x="-5.4" y="-5.2" width="10.8" height="10.4" fill="#dcdcdc"/>
<path d="M-9 -4.6V-8.6H-4.6M4.6 -8.6H9V-4.6M9 4.6V8.6H4.6M-4.6 8.6H-9V4.6" fill="none" stroke="#a0a0a0" stroke-width="1.2"/></g></svg>
<span class="t sh" style="top:224px;font-size:13.2px;line-height:16px;height:16px;color:#e4e4e4;left:1247.20px;letter-spacing:0.22px;">Cube.002</span>
<span class="t sh" style="top:224px;font-size:13.2px;line-height:16px;height:16px;color:#e4e4e4;left:1384.20px;letter-spacing:-0.05px;">Material.001</span>
<div class="abs" style="left:1196.60px;top:257.40px;width:347.80px;height:101.80px;background:#343434;border-radius:5px;box-shadow:inset 0 0 0 1px #474747;"></div>
<div class="abs" style="left:1203.00px;top:264.00px;width:335.10px;height:24.10px;background:#696e7c;border-radius:4.5px;"></div>
<span class="t sh" style="top:269px;font-size:13.2px;line-height:16px;height:16px;color:#fff;left:1235.40px;letter-spacing:-0.05px;">Material.001</span>
<div class="abs" style="left:1555.40px;top:257.20px;width:25.20px;height:51.40px;background:#3a3a3a;border-radius:5px;"></div>
<div class="abs" style="left:1556.00px;top:257.80px;width:24.10px;height:24.50px;background:#545454;border-radius:4.5px 4.5px 0 0;"></div>
<div class="abs" style="left:1556.00px;top:283.10px;width:24.10px;height:24.90px;background:#545454;border-radius:0 0 4.5px 4.5px;"></div>
<div class="abs" style="left:1556.10px;top:316.80px;width:24.00px;height:24.20px;background:#2b2b2b;border-radius:4.5px;"></div>
<div class="abs" style="left:1196.30px;top:365.90px;width:41.00px;height:26.10px;background:#2b2b2b;border-radius:5px 0 0 5px;box-shadow:inset 0 0 0 1px #484848;"></div>
<div class="abs" style="left:1236.60px;top:366.80px;width:179.00px;height:24.30px;background:#1e1e1e;border-radius:0;box-shadow:inset 0 0 0 0.6px #2e2e2e;"></div>
<div class="abs" style="left:1415.20px;top:366.80px;width:114.40px;height:24.30px;background:#3a3a3a;border-radius:0 5px 5px 0;"></div>
<div class="abs" style="left:1415.80px;top:367.40px;width:35.30px;height:23.10px;background:#545454;border-radius:0;"></div>
<div class="abs" style="left:1451.90px;top:367.40px;width:25.10px;height:23.10px;background:#545454;border-radius:0;"></div>
<div class="abs" style="left:1477.80px;top:367.40px;width:25.40px;height:23.10px;background:#545454;border-radius:0;"></div>
<div class="abs" style="left:1504.00px;top:367.40px;width:25.00px;height:23.10px;background:#545454;border-radius:0 4.5px 4.5px 0;"></div>
<div class="abs" style="left:1541.40px;top:366.80px;width:38.70px;height:24.30px;background:#2b2b2b;border-radius:4.5px;"></div>
<svg width="16" height="16" viewBox="0.000 0.000 16 16" style="left:1220px;top:372px;"><path d="M4.05 6.025L8 9.975L11.95 6.025" fill="none" stroke="#e0e0e0" stroke-width="1.35" stroke-linecap="butt" stroke-linejoin="miter"/></svg>
<svg width="16" height="16" viewBox="-0.400 0.000 16 16" style="left:1564px;top:372px;"><path d="M4.05 6.025L8 9.975L11.95 6.025" fill="none" stroke="#e0e0e0" stroke-width="1.35" stroke-linecap="butt" stroke-linejoin="miter"/></svg>
<span class="t" style="top:372px;font-size:13.2px;line-height:16px;height:16px;color:#e6e6e6;left:1246.30px;letter-spacing:-0.05px;">Material.001</span>
<span class="t" style="top:372px;font-size:13.2px;line-height:16px;height:16px;color:#e6e6e6;left:1232.60px;width:400px;text-align:center;">2</span>
<span class="t sh ttl" style="top:410px;font-size:14.4px;line-height:18px;height:18px;color:#dadada;left:1214.20px;letter-spacing:0.2px;">Preview</span>
<span class="t sh ttl" style="top:441px;font-size:14.4px;line-height:18px;height:18px;color:#dadada;left:1214.20px;letter-spacing:0.2px;">Surface</span>
<div class="abs" style="left:1196.90px;top:475.00px;width:383.20px;height:23.80px;background:#507ab9;border-radius:4.5px;"></div>
<span class="t sh" style="top:480px;font-size:13.2px;line-height:16px;height:16px;color:#fff;left:1199.20px;width:400px;text-align:center;">Use Nodes</span>
<span class="t sh" style="top:525px;font-size:13.2px;line-height:16px;height:16px;color:#dcdcdc;left:928.50px;width:400px;text-align:right;letter-spacing:0.15px;">Surface</span>
<div class="abs" style="left:1338.50px;top:518.50px;width:216.70px;height:26.70px;background:#2b2b2b;border-radius:5px;box-shadow:inset 0 0 0 1px #484848;"></div>
<span class="t" style="top:525px;font-size:13.2px;line-height:16px;height:16px;color:#e0e0e0;left:1366.40px;">Principled BSDF</span>
<div class="abs" style="left:1338.50px;top:563.50px;width:216.70px;height:26.60px;background:#2b2b2b;border-radius:5px;box-shadow:inset 0 0 0 1px #484848;"></div>
<span class="t" style="top:570px;font-size:13.2px;line-height:16px;height:16px;color:#e0e0e0;left:1349.00px;letter-spacing:0.6px;">GGX</span>
<svg width="16" height="16" viewBox="-0.400 0.000 16 16" style="left:1538px;top:570px;"><path d="M4.05 6.025L8 9.975L11.95 6.025" fill="none" stroke="#e0e0e0" stroke-width="1.35" stroke-linecap="butt" stroke-linejoin="miter"/></svg>
<div class="abs" style="left:1338.50px;top:595.70px;width:216.70px;height:26.50px;background:#2b2b2b;border-radius:5px;box-shadow:inset 0 0 0 1px #484848;"></div>
<span class="t" style="top:602px;font-size:13.2px;line-height:16px;height:16px;color:#e0e0e0;left:1349.00px;">Christensen-Burley</span>
<svg width="16" height="16" viewBox="-0.400 0.000 16 16" style="left:1538px;top:602px;"><path d="M4.05 6.025L8 9.975L11.95 6.025" fill="none" stroke="#e0e0e0" stroke-width="1.35" stroke-linecap="butt" stroke-linejoin="miter"/></svg>
<span class="t sh" style="top:634px;font-size:13.2px;line-height:16px;height:16px;color:#dcdcdc;left:928.40px;width:400px;text-align:right;letter-spacing:-0.1px;">Base Color</span>
<div class="abs" style="left:1338.50px;top:627.80px;width:27.00px;height:26.30px;background:#2b2b2b;border-radius:5px 0 0 5px;box-shadow:inset 0 0 0 1px #484848;"></div>
<div class="abs" style="left:1364.60px;top:628.00px;width:190.40px;height:26.00px;background:#e8e8e8;border-radius:0 5px 5px 0;"></div>
<span class="t sh" style="top:666px;font-size:13.2px;line-height:16px;height:16px;color:#dcdcdc;left:928.60px;width:400px;text-align:right;letter-spacing:0.3px;">Subsurface</span>
<div class="abs" style="left:1338.50px;top:660.00px;width:27.00px;height:30.90px;background:#2b2b2b;border-radius:5px 0 0 0;box-shadow:inset 0 0 0 1px #484848;"></div>
<div class="abs" style="left:1364.60px;top:660.00px;width:190.40px;height:30.00px;background:#575757;border-radius:0 5px 0 0;box-shadow:inset 0 0 0 1px #4c4c4c;"></div>
<span class="t" style="top:666px;font-size:13.2px;line-height:16px;height:16px;color:#e6e6e6;left:1258.40px;width:400px;text-align:center;letter-spacing:0.2px;">0.000</span>
<svg width="436" height="470" viewBox="1149.000 214.000 436 470" style="left:1149px;top:214px;"><rect x="1167.2" y="222.5" width="17.2" height="6.2" rx="3.1" fill="none" stroke="#e0e0e0" stroke-width="1.2"/><path d="M1170.3 222.5H1174.2V228.7H1170.3A3.1 3.1 0 0 1 1170.3 222.5Z" fill="#e0e0e0"/><rect x="1167.2" y="232.3" width="17.2" height="6.9" rx="3.45" fill="none" stroke="#e0e0e0" stroke-width="1.2"/><path d="M1170.65 232.3H1177.8V239.20000000000002H1170.65A3.45 3.45 0 0 1 1170.65 232.3Z" fill="#e0e0e0"/><path d="M1329.6 227.6L1334.4 231.4L1329.6 235.2Z" fill="#303030"/><circle cx="1364" cy="230.8" r="9.1" fill="#ececec"/><path d="M1364.50 223.05A7.8 7.8 0 0 1 1371.77 231.50Q1367.90 234.00 1364.50 234.30Z" fill="#383838"/><path d="M1363.50 234.30Q1360.10 234.00 1356.23 231.50A7.8 7.8 0 0 0 1363.50 238.55Z" fill="#383838"/><g fill="none" stroke="#8c8c8c" stroke-width="1.3" stroke-linejoin="round" stroke-linecap="round"><path d="M1560.4 239.8L1566 234.2"/><path d="M1563.2 229.6L1570.4 236.8C1571.6 235.4 1571.8 234 1571.4 232.8L1575.4 228.8L1578.4 228.2L1572.2 222L1571.4 224.8L1567.4 228.8C1566 228.4 1564.6 228.6 1563.2 229.6Z"/></g><defs><radialGradient id="sph" cx="0.3" cy="0.4" r="0.8"><stop offset="0" stop-color="#f2f2f2"/><stop offset="0.5" stop-color="#cfcfcf"/><stop offset="0.8" stop-color="#8a8a8a"/><stop offset="1" stop-color="#505050"/></radialGradient></defs><circle cx="1213.9" cy="276.3" r="8.2" fill="url(#sph)"/><path d="M1211.2 342.4L1218.8 346.4L1211.2 350.4Z" fill="#a8a8a8"/><rect x="1376.9" y="345.2" width="2.2" height="2.2" fill="#222" opacity=".7"/><rect x="1376.4" y="344.6" width="1.9" height="1.9" fill="#c6c6c6"/><rect x="1380.9" y="345.2" width="2.2" height="2.2" fill="#222" opacity=".7"/><rect x="1380.4" y="344.6" width="1.9" height="1.9" fill="#c6c6c6"/><rect x="1384.9" y="345.2" width="2.2" height="2.2" fill="#222" opacity=".7"/><rect x="1384.4" y="344.6" width="1.9" height="1.9" fill="#c6c6c6"/><rect x="1388.9" y="345.2" width="2.2" height="2.2" fill="#222" opacity=".7"/><rect x="1388.4" y="344.6" width="1.9" height="1.9" fill="#c6c6c6"/><rect x="1376.9" y="349.4" width="2.2" height="2.2" fill="#222" opacity=".7"/><rect x="1376.4" y="348.8" width="1.9" height="1.9" fill="#c6c6c6"/><rect x="1380.9" y="349.4" width="2.2" height="2.2" fill="#222" opacity=".7"/><rect x="1380.4" y="348.8" width="1.9" height="1.9" fill="#c6c6c6"/><rect x="1384.9" y="349.4" width="2.2" height="2.2" fill="#222" opacity=".7"/><rect x="1384.4" y="348.8" width="1.9" height="1.9" fill="#c6c6c6"/><rect x="1388.9" y="349.4" width="2.2" height="2.2" fill="#222" opacity=".7"/><rect x="1388.4" y="348.8" width="1.9" height="1.9" fill="#c6c6c6"/><path d="M1563 269.5H1575M1569 263.5V275.5" stroke="#e6e6e6" stroke-width="1.3"/><path d="M1563 294.6H1575" stroke="#e6e6e6" stroke-width="1.3"/><path d="M1561.6 326.4L1567.6 332L1573.6 326.4" fill="none" stroke="#e6e6e6" stroke-width="1.3" stroke-linecap="round" stroke-linejoin="round"/><circle cx="1211.6" cy="379" r="8.8" fill="#ececec"/><path d="M1212.10 371.55A7.500000000000001 7.500000000000001 0 0 1 1219.07 379.70Q1215.35 382.20 1212.10 382.50Z" fill="#2b2b2b"/><path d="M1211.10 382.50Q1207.85 382.20 1204.13 379.70A7.500000000000001 7.500000000000001 0 0 0 1211.10 386.45Z" fill="#2b2b2b"/><path d="M1464.2 370.8C1466.6 372.6 1469.2 373.4 1472.2 373.4C1472.4 380 1470.4 384.6 1464.2 387.8C1458 384.6 1456 380 1456.2 373.4C1459.2 373.4 1461.8 372.6 1464.2 370.8Z" fill="none" stroke="#a4a4a4" stroke-width="1.3" stroke-linejoin="round"/><path d="M1486.8 375.4H1482V387.4H1493.6V384" fill="none" stroke="#e0e0e0" stroke-width="1.3"/><path d="M1487.6 370.6H1495.6L1499.6 374.6V383.2H1487.6Z" fill="none" stroke="#e0e0e0" stroke-width="1.3" stroke-linejoin="round"/><path d="M1495.4 370.6L1499.8 375H1495.4Z" fill="#e0e0e0"/><path d="M1511.6 374L1521.4 384M1521.4 374L1511.6 384" stroke="#e6e6e6" stroke-width="1.4" stroke-linecap="round"/><path d="M1549.2 372.5H1562.8L1556 385.5Z" fill="none" stroke="#e6e6e6" stroke-width="1.25" stroke-linejoin="round"/><rect x="1547.3" y="370.6" width="3.8" height="3.8" fill="#2b2b2b" stroke="#e6e6e6" stroke-width="1.2"/><rect x="1560.8999999999999" y="370.6" width="3.8" height="3.8" fill="#2b2b2b" stroke="#e6e6e6" stroke-width="1.2"/><rect x="1554.1" y="383.6" width="3.8" height="3.8" fill="#2b2b2b" stroke="#e6e6e6" stroke-width="1.2"/><path d="M1197.6 413.6L1205.6 417.6L1197.6 421.6Z" fill="#a0a0a0"/><path d="M1197.8 444.8H1205.8L1201.8 452.8Z" fill="#a0a0a0"/><rect x="1566.5" y="414.0" width="2.2" height="2.2" fill="#222" opacity=".7"/><rect x="1566.0" y="413.4" width="1.9" height="1.9" fill="#c6c6c6"/><rect x="1570.5" y="414.0" width="2.2" height="2.2" fill="#222" opacity=".7"/><rect x="1570.0" y="413.4" width="1.9" height="1.9" fill="#c6c6c6"/><rect x="1574.5" y="414.0" width="2.2" height="2.2" fill="#222" opacity=".7"/><rect x="1574.0" y="413.4" width="1.9" height="1.9" fill="#c6c6c6"/><rect x="1578.5" y="414.0" width="2.2" height="2.2" fill="#222" opacity=".7"/><rect x="1578.0" y="413.4" width="1.9" height="1.9" fill="#c6c6c6"/><rect x="1566.5" y="418.2" width="2.2" height="2.2" fill="#222" opacity=".7"/><rect x="1566.0" y="417.6" width="1.9" height="1.9" fill="#c6c6c6"/><rect x="1570.5" y="418.2" width="2.2" height="2.2" fill="#222" opacity=".7"/><rect x="1570.0" y="417.6" width="1.9" height="1.9" fill="#c6c6c6"/><rect x="1574.5" y="418.2" width="2.2" height="2.2" fill="#222" opacity=".7"/><rect x="1574.0" y="417.6" width="1.9" height="1.9" fill="#c6c6c6"/><rect x="1578.5" y="418.2" width="2.2" height="2.2" fill="#222" opacity=".7"/><rect x="1578.0" y="417.6" width="1.9" height="1.9" fill="#c6c6c6"/><rect x="1566.5" y="445.0" width="2.2" height="2.2" fill="#222" opacity=".7"/><rect x="1566.0" y="444.4" width="1.9" height="1.9" fill="#c6c6c6"/><rect x="1570.5" y="445.0" width="2.2" height="2.2" fill="#222" opacity=".7"/><rect x="1570.0" y="444.4" width="1.9" height="1.9" fill="#c6c6c6"/><rect x="1574.5" y="445.0" width="2.2" height="2.2" fill="#222" opacity=".7"/><rect x="1574.0" y="444.4" width="1.9" height="1.9" fill="#c6c6c6"/><rect x="1578.5" y="445.0" width="2.2" height="2.2" fill="#222" opacity=".7"/><rect x="1578.0" y="444.4" width="1.9" height="1.9" fill="#c6c6c6"/><rect x="1566.5" y="449.2" width="2.2" height="2.2" fill="#222" opacity=".7"/><rect x="1566.0" y="448.6" width="1.9" height="1.9" fill="#c6c6c6"/><rect x="1570.5" y="449.2" width="2.2" height="2.2" fill="#222" opacity=".7"/><rect x="1570.0" y="448.6" width="1.9" height="1.9" fill="#c6c6c6"/><rect x="1574.5" y="449.2" width="2.2" height="2.2" fill="#222" opacity=".7"/><rect x="1574.0" y="448.6" width="1.9" height="1.9" fill="#c6c6c6"/><rect x="1578.5" y="449.2" width="2.2" height="2.2" fill="#222" opacity=".7"/><rect x="1578.0" y="448.6" width="1.9" height="1.9" fill="#c6c6c6"/><rect x="1204.6" y="478.2" width="10.6" height="7.4" rx="2" fill="#fff"/><rect x="1202.2" y="488.6" width="11" height="7.6" rx="2" fill="#fff"/><path d="M1206.6 482.4H1213.2M1204.2 493H1211.2" stroke="#507ab9" stroke-width="1"/><path d="M1215.2 481.4H1217.8C1219.6 481.4 1220.8 482.6 1220.8 484.4V489.6C1220.8 491.4 1219.6 492.6 1217.8 492.6H1213.4" fill="none" stroke="#fff" stroke-width="1.2"/><circle cx="1352.1" cy="532.1" r="4.3" fill="#63c763" stroke="#2a2a2a" stroke-width="0.7"/><circle cx="1352.1" cy="641.1" r="4.3" fill="#c7c729" stroke="#2a2a2a" stroke-width="0.7"/><circle cx="1352.1" cy="673.1" r="4.3" fill="#a1a1a1" stroke="#2a2a2a" stroke-width="0.7"/><circle cx="1568.3" cy="577" r="2.7" fill="#d0d0d0"/><circle cx="1568.3" cy="609" r="2.7" fill="#d0d0d0"/><circle cx="1568.3" cy="641" r="2.7" fill="#d0d0d0"/><circle cx="1568.3" cy="673" r="2.7" fill="#d0d0d0"/></svg>
</div>
</body>
</html>
